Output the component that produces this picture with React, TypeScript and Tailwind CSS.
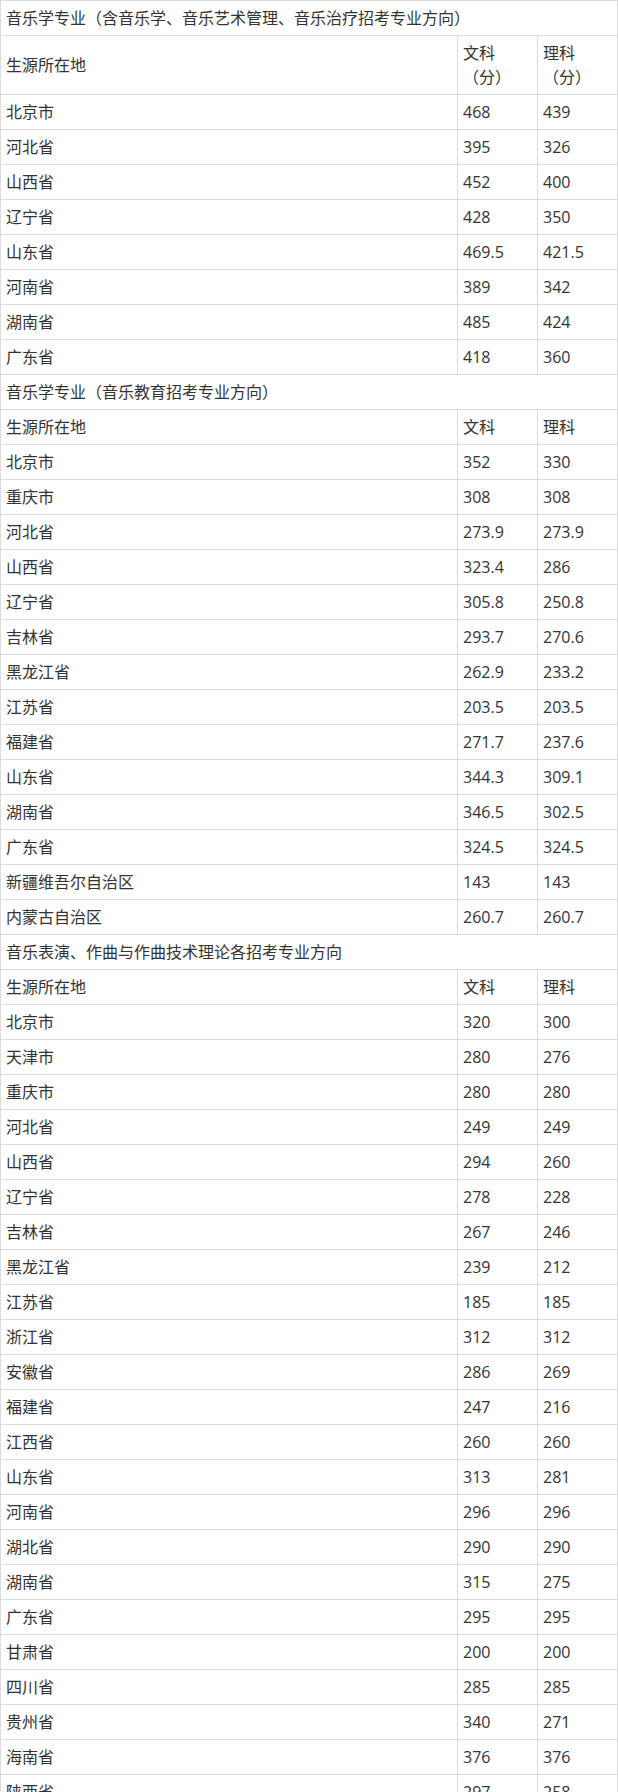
// -- Types -------------------------------------------------------------------

type ScoreRow = [region: string, arts: string, science: string];

interface Section {
  title: string;
  unitHeader: boolean;
  rows: ScoreRow[];
}

// -- Data --------------------------------------------------------------------

const SECTIONS: Section[] = [
  {
    title: '音乐学专业（含音乐学、音乐艺术管理、音乐治疗招考专业方向）',
    unitHeader: true,
    rows: [
      ['北京市', '468', '439'],
      ['河北省', '395', '326'],
      ['山西省', '452', '400'],
      ['辽宁省', '428', '350'],
      ['山东省', '469.5', '421.5'],
      ['河南省', '389', '342'],
      ['湖南省', '485', '424'],
      ['广东省', '418', '360'],
    ],
  },
  {
    title: '音乐学专业（音乐教育招考专业方向）',
    unitHeader: false,
    rows: [
      ['北京市', '352', '330'],
      ['重庆市', '308', '308'],
      ['河北省', '273.9', '273.9'],
      ['山西省', '323.4', '286'],
      ['辽宁省', '305.8', '250.8'],
      ['吉林省', '293.7', '270.6'],
      ['黑龙江省', '262.9', '233.2'],
      ['江苏省', '203.5', '203.5'],
      ['福建省', '271.7', '237.6'],
      ['山东省', '344.3', '309.1'],
      ['湖南省', '346.5', '302.5'],
      ['广东省', '324.5', '324.5'],
      ['新疆维吾尔自治区', '143', '143'],
      ['内蒙古自治区', '260.7', '260.7'],
    ],
  },
  {
    title: '音乐表演、作曲与作曲技术理论各招考专业方向',
    unitHeader: false,
    rows: [
      ['北京市', '320', '300'],
      ['天津市', '280', '276'],
      ['重庆市', '280', '280'],
      ['河北省', '249', '249'],
      ['山西省', '294', '260'],
      ['辽宁省', '278', '228'],
      ['吉林省', '267', '246'],
      ['黑龙江省', '239', '212'],
      ['江苏省', '185', '185'],
      ['浙江省', '312', '312'],
      ['安徽省', '286', '269'],
      ['福建省', '247', '216'],
      ['江西省', '260', '260'],
      ['山东省', '313', '281'],
      ['河南省', '296', '296'],
      ['湖北省', '290', '290'],
      ['湖南省', '315', '275'],
      ['广东省', '295', '295'],
      ['甘肃省', '200', '200'],
      ['四川省', '285', '285'],
      ['贵州省', '340', '271'],
      ['海南省', '376', '376'],
      ['陕西省', '297', '258'],
    ],
  },
];

// -- Sub-components ----------------------------------------------------------

const cell = 'border border-[#dcdcdc] px-[5px] py-[5px] align-middle';

const SectionRows = ({ section }: { section: Section }) => (
  <>
    <tr>
      <td colSpan={3} className={cell}>
        {section.title}
      </td>
    </tr>
    <tr>
      <td className={cell}>生源所在地</td>
      <td className={cell}>
        文科
        {section.unitHeader && (
          <>
            <br />
            （分）
          </>
        )}
      </td>
      <td className={cell}>
        理科
        {section.unitHeader && (
          <>
            <br />
            （分）
          </>
        )}
      </td>
    </tr>
    {section.rows.map(([region, arts, science], i) => (
      <tr key={`${region}-${i}`}>
        <td className={cell}>{region}</td>
        <td className={cell}>{arts}</td>
        <td className={cell}>{science}</td>
      </tr>
    ))}
  </>
);

// -- Main component ----------------------------------------------------------

const App = () => (
  <div className="min-h-screen bg-white">
    <table className="w-[617px] table-fixed border-collapse font-['Open_Sans','Noto_Sans_CJK_SC',sans-serif] text-[16px] leading-[24px] text-[#333]">
      <colgroup>
        <col className="w-[457px]" />
        <col className="w-[80px]" />
        <col className="w-[80px]" />
      </colgroup>
      <tbody>
        {SECTIONS.map((section) => (
          <SectionRows key={section.title} section={section} />
        ))}
      </tbody>
    </table>
  </div>
);

export default App;
